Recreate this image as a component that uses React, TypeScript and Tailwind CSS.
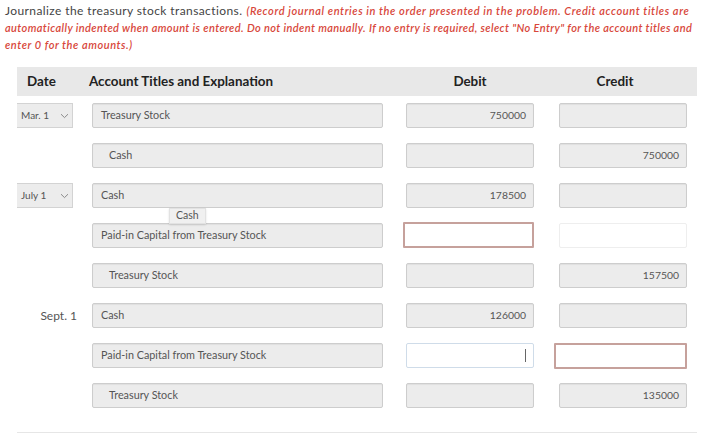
import React from "react";

type Row = {
  date?: { kind: "select" | "text"; label: string };
  account: string;
  indent?: boolean;
  debit?: string;
  credit?: string;
  debitState?: "normal" | "error" | "focus";
  creditState?: "normal" | "error" | "blank";
  tooltip?: boolean;
};

const rows: Row[] = [
  { date: { kind: "select", label: "Mar. 1" }, account: "Treasury Stock", debit: "750000" },
  { account: "Cash", indent: true, credit: "750000" },
  { date: { kind: "select", label: "July 1" }, account: "Cash", debit: "178500", tooltip: true },
  { account: "Paid-in Capital from Treasury Stock", debitState: "error", creditState: "blank" },
  { account: "Treasury Stock", indent: true, credit: "157500" },
  { date: { kind: "text", label: "Sept. 1" }, account: "Cash", debit: "126000" },
  { account: "Paid-in Capital from Treasury Stock", debitState: "focus", creditState: "error" },
  { account: "Treasury Stock", indent: true, credit: "135000" },
];

const boxBase =
  "h-[25px] rounded-[2px] border-[1.5px] border-[#cdcdcd] bg-[#ececec] shadow-[inset_0_1px_1px_rgba(0,0,0,0.06)] flex items-center text-[#555]";

function Chevron() {
  return (
    <svg width="9" height="6" viewBox="0 0 9 6" className="ml-auto mr-[3px]">
      <path d="M1 1.2 L4.5 4.6 L8 1.2" fill="none" stroke="#8a8a8a" strokeWidth="1" />
    </svg>
  );
}

function Amount({ value, state }: { value?: string; state?: string }) {
  if (state === "error") {
    return (
      <div className="h-[26px] w-[131px] -ml-[3px] -mt-[1px] border-[2.5px] border-[#c6a19c] bg-white rounded-[1px]" />
    );
  }
  if (state === "focus") {
    return (
      <div className="h-[25px] w-[128px] border-[1.5px] border-[#cfdce9] bg-white rounded-[2px] flex items-center justify-end pr-[7px]">
        <div className="w-[1px] h-[13px] bg-[#666]" />
      </div>
    );
  }
  if (state === "blank") {
    return <div className="h-[25px] w-[128px] border border-[#eeeeee] bg-white rounded-[2px]" />;
  }
  return (
    <div className={`${boxBase} w-[128px] justify-end pr-[7px] text-[10.4px]`}>
      <span>{value ?? ""}</span>
    </div>
  );
}

export default function App() {
  return (
    <div
      className="w-[720px] h-[437px] bg-white overflow-hidden relative"
      style={{ fontFamily: "Lato, 'Open Sans', sans-serif" }}
    >
      <div className="pl-[5px] leading-[17px] text-[#444] whitespace-nowrap">
        <div>
          <span className="text-[12px] tracking-[0.4px]">Journalize the treasury stock transactions.</span>{" "}
          <span className="italic font-semibold text-[#d8473b] text-[11px] tracking-[0.6px]">
            (Record journal entries in the order presented in the problem. Credit account titles are
          </span>
        </div>
        <div className="italic font-semibold text-[#d8473b] text-[11px] tracking-[0.38px]">
          automatically indented when amount is entered. Do not indent manually. If no entry is
          required, select "No Entry" for the account titles and
        </div>
        <div className="italic font-semibold text-[#d8473b] text-[11px] tracking-[0.55px]">
          enter 0 for the amounts.)
        </div>
      </div>

      <div className="ml-[17px] w-[680px] mt-[14px]">
        <div className="h-[29px] bg-[#e8e8e8] flex items-center text-[13.4px] font-bold text-[#222]">
          <div className="w-[60px] pl-[10px]">Date</div>
          <div className="w-[306px] pl-[12px]">Account Titles and Explanation</div>
          <div className="w-[143px] pl-[23px] text-center">
            <div className="w-[128px]">Debit</div>
          </div>
          <div className="w-[153px] pl-[25px]">
            <div className="w-[128px] text-center">Credit</div>
          </div>
        </div>

        <div className="mt-[7px] flex flex-col gap-[15px]">
          {rows.map((r, i) => (
            <div key={i} className="flex items-center h-[25px]">
              <div className="w-[60px] flex">
                {r.date?.kind === "select" && (
                  <div className="w-[56px] h-[25px] bg-[#ececec] border-y-[1.5px] border-r-[1.5px] border-[#d3d3d3] flex items-center pl-[4px] text-[10px] text-[#555]">
                    <span>{r.date.label}</span>
                    <Chevron />
                  </div>
                )}
                {r.date?.kind === "text" && (
                  <div className="w-[60px] text-right text-[12px] text-[#555]">{r.date.label}</div>
                )}
              </div>
              <div className="ml-[15px] relative">
                <div
                  className={`${boxBase} w-[291px] text-[10.8px] ${r.indent ? "pl-[16px]" : "pl-[8px]"}`}
                >
                  <span>{r.account}</span>
                </div>
                {r.tooltip && (
                  <div className="absolute left-[77px] top-[25px] h-[16px] px-[6px] bg-[#f0f0f0] border border-[#e2e2e2] shadow-[0_1px_2px_rgba(0,0,0,0.12)] text-[10.5px] text-[#555] flex items-center z-10">
                    Cash
                  </div>
                )}
              </div>
              <div className="ml-[23px]">
                <Amount value={r.debit} state={r.debitState} />
              </div>
              <div className="ml-[25px]">
                {r.creditState === "error" ? (
                  <div className="h-[26px] w-[133px] -ml-[5px] border-[2.5px] border-[#c6a19c] bg-white rounded-[1px]" />
                ) : (
                  <Amount value={r.credit} state={r.creditState} />
                )}
              </div>
            </div>
          ))}
        </div>

        <div className="mt-[24px] h-[1px] bg-[#e6e6e6]" />
      </div>
    </div>
  );
}
